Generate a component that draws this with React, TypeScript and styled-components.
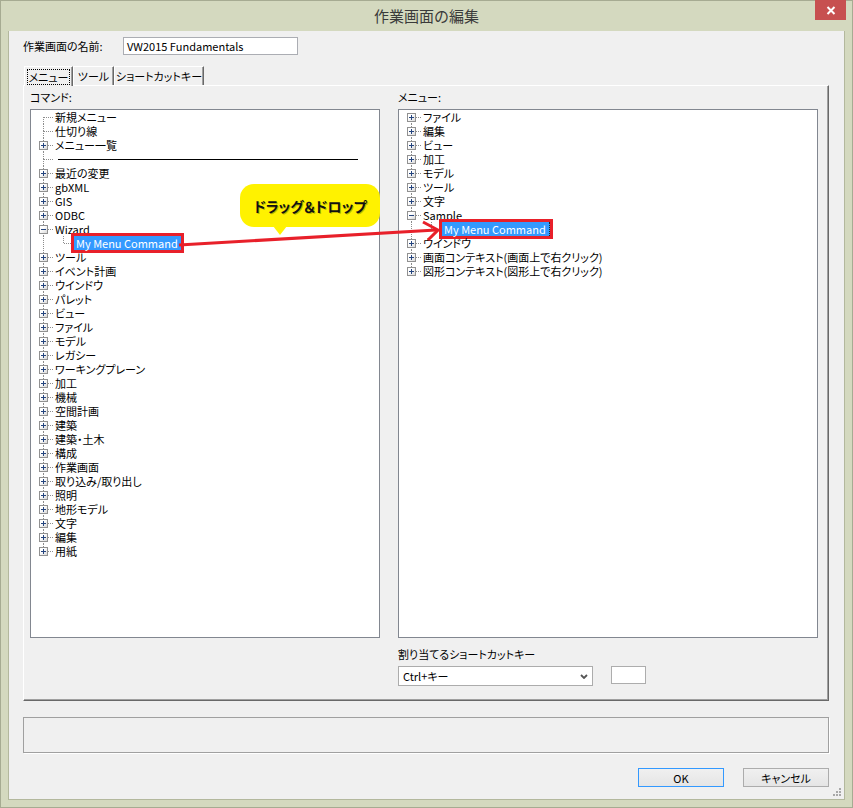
import React from 'react';
import styled, { createGlobalStyle, css } from 'styled-components';

const FONT = `"Noto Sans CJK JP", "Noto Sans", sans-serif`;
const DOT = '#8c8c8c';

const GlobalStyle = createGlobalStyle`
  html, body {
    margin: 0;
    padding: 0;
    background: #d4d9bf;
  }
  body {
    font-family: ${FONT};
  }
`;

type Node = {
  label?: string;
  box?: 'plus' | 'minus';
  separator?: boolean;
  selected?: boolean;
  marked?: boolean;
  focus?: boolean;
  children?: Node[];
};

const plus = (label: string): Node => ({ label, box: 'plus' });

const commandTree: Node[] = [
  { label: '新規メニュー' },
  { label: '仕切り線' },
  plus('メニュー一覧'),
  { separator: true },
  plus('最近の変更'),
  plus('gbXML'),
  plus('GIS'),
  plus('ODBC'),
  {
    label: 'Wizard',
    box: 'minus',
    children: [{ label: 'My Menu Command', selected: true, marked: true }],
  },
  ...[
    'ツール', 'イベント計画', 'ウインドウ', 'パレット', 'ビュー', 'ファイル', 'モデル',
    'レガシー', 'ワーキングプレーン', '加工', '機械', '空間計画', '建築', '建築・土木',
    '構成', '作業画面', '取り込み/取り出し', '照明', '地形モデル', '文字', '編集', '用紙',
  ].map(plus),
];

const menuTree: Node[] = [
  ...['ファイル', '編集', 'ビュー', '加工', 'モデル', 'ツール', '文字'].map(plus),
  {
    label: 'Sample',
    box: 'minus',
    children: [{ label: 'My Menu Command', selected: true, marked: true, focus: true }],
  },
  plus('ウインドウ'),
  plus('画面コンテキスト(画面上で右クリック)'),
  plus('図形コンテキスト(図形上で右クリック)'),
];

function ExpandBox({ kind }: { kind: 'plus' | 'minus' }) {
  return (
    <Box>
      <svg width="7" height="7" viewBox="0 0 7 7" shapeRendering="crispEdges">
        <rect x="1" y="3" width="5" height="1" fill="#24447e" />
        {kind === 'plus' && <rect x="3" y="1" width="1" height="5" fill="#24447e" />}
      </svg>
    </Box>
  );
}

function TreeRows({ nodes, guides }: { nodes: Node[]; guides: boolean[] }) {
  return (
    <>
      {nodes.map((node, i) => {
        const first = i === 0 && guides.length === 0;
        const last = i === nodes.length - 1;
        return (
          <React.Fragment key={i}>
            <Row>
              {guides.map((g, j) => (
                <Guide key={j} $line={g} />
              ))}
              <Connector $top={!first} $bottom={!last}>
                {node.box && <ExpandBox kind={node.box} />}
              </Connector>
              {node.separator ? (
                <SeparatorLine />
              ) : (
                <Label $selected={node.selected} $marked={node.marked} $focus={node.focus}>
                  {node.label}
                </Label>
              )}
            </Row>
            {node.children && <TreeRows nodes={node.children} guides={[...guides, !last]} />}
          </React.Fragment>
        );
      })}
    </>
  );
}

export default function App() {
  return (
    <>
      <GlobalStyle />
      <Window>
        <TitleBar>
          <Title>作業画面の編集</Title>
          <CloseButton>
            <svg width="10" height="9" viewBox="0 0 10 9">
              <path d="M1.5 1 L8.5 8 M8.5 1 L1.5 8" stroke="#fff" strokeWidth="2" />
            </svg>
          </CloseButton>
        </TitleBar>

        <Client>
          <NameRow>
            <NameLabel>作業画面の名前:</NameLabel>
            <NameInput>VW2015 Fundamentals</NameInput>
          </NameRow>

          <TabStrip>
            <Tab $w={49} $active>
              <FocusText>メニュー</FocusText>
            </Tab>
            <Tab $w={41}>ツール</Tab>
            <Tab $w={90}>ショートカットキー</Tab>
          </TabStrip>

          <Panel>
            <Column>
              <FieldLabel>コマンド:</FieldLabel>
              <TreeBox>
                <TreeRows nodes={commandTree} guides={[]} />
              </TreeBox>
            </Column>
            <Column>
              <FieldLabel>メニュー:</FieldLabel>
              <TreeBox>
                <TreeRows nodes={menuTree} guides={[]} />
              </TreeBox>
              <ShortcutLabel>割り当てるショートカットキー</ShortcutLabel>
              <ShortcutRow>
                <Select>
                  <span>Ctrl+キー</span>
                  <svg width="8" height="5" viewBox="0 0 8 5">
                    <path d="M1 1 L4 4 L7 1" stroke="#555" strokeWidth="1.8" fill="none" />
                  </svg>
                </Select>
                <KeyBox />
              </ShortcutRow>
            </Column>
          </Panel>

          <StatusBox />

          <ButtonRow>
            <DialogButton $primary>OK</DialogButton>
            <DialogButton>キャンセル</DialogButton>
          </ButtonRow>

          <Grip>
            <svg width="8" height="8" viewBox="0 0 8 8" shapeRendering="crispEdges">
              <rect x="6" y="0" width="2" height="2" fill="#a8a8a8" />
              <rect x="3" y="3" width="2" height="2" fill="#a8a8a8" />
              <rect x="6" y="3" width="2" height="2" fill="#a8a8a8" />
              <rect x="0" y="6" width="2" height="2" fill="#a8a8a8" />
              <rect x="3" y="6" width="2" height="2" fill="#a8a8a8" />
              <rect x="6" y="6" width="2" height="2" fill="#a8a8a8" />
            </svg>
          </Grip>
        </Client>

        <Callout>ドラッグ＆ドロップ</Callout>
        <ArrowLayer width="853" height="808" viewBox="0 0 853 808">
          <line x1="178" y1="244" x2="435" y2="229" stroke="#e8202a" strokeWidth="3" />
          <polyline
            points="422,221 437,229 427,239"
            stroke="#e8202a"
            strokeWidth="3"
            fill="none"
          />
        </ArrowLayer>
      </Window>
    </>
  );
}

const Window = styled.div`
  position: relative;
  width: 853px;
  height: 808px;
  box-sizing: border-box;
  border: 1px solid #a6ab92;
  background: #d4d9bf;
  display: flex;
  flex-direction: column;
  font-family: ${FONT};
  font-size: 11px;
  color: #000;
  font-feature-settings: "palt";
`;

const TitleBar = styled.div`
  height: 30px;
  flex: none;
  display: grid;
  grid-template-columns: 1fr auto 1fr;
  align-items: start;
`;

const Title = styled.div`
  grid-column: 2;
  font-size: 15px;
  line-height: 30px;
  color: #3a3a3a;
  font-feature-settings: normal;
`;

const CloseButton = styled.div`
  grid-column: 3;
  justify-self: end;
  margin-top: -1px;
  margin-right: 6px;
  width: 31px;
  height: 20px;
  background: #c75050;
  display: flex;
  align-items: center;
  justify-content: center;
`;

const Client = styled.div`
  position: relative;
  flex: 1;
  margin: 0 7px 7px 7px;
  padding: 6px 15px 0 14px;
  background: #f0f0f0;
  border: 1px solid #b3b89d;
  border-width: 0 1px 1px 1px;
  display: flex;
  flex-direction: column;
`;

const NameRow = styled.div`
  display: flex;
  align-items: center;
  height: 18px;
`;

const NameLabel = styled.span`
  width: 100px;
  flex: none;
  line-height: 14px;
`;

const NameInput = styled.div`
  width: 175px;
  height: 18px;
  box-sizing: border-box;
  border: 1px solid #abadb3;
  background: #fff;
  padding: 0 3px;
  line-height: 16px;
`;

const TabStrip = styled.div`
  display: flex;
  margin-top: 11px;
  padding-left: 1px;
  height: 19px;
  position: relative;
  z-index: 1;
`;

const Tab = styled.div<{ $w: number; $active?: boolean }>`
  width: ${p => p.$w}px;
  height: 19px;
  box-sizing: border-box;
  border-top: 1px solid #fff;
  border-left: 1px solid #fff;
  border-right: 1px solid #696969;
  box-shadow: inset -1px 0 0 #a0a0a0;
  background: #f0f0f0;
  display: flex;
  align-items: center;
  justify-content: center;
  line-height: 14px;
  white-space: nowrap;
  ${p =>
    p.$active &&
    css`
      height: 20px;
    `}
`;

const FocusText = styled.span`
  outline: 1px dotted #000;
  padding: 0 1px;
`;

const Panel = styled.div`
  height: 616px;
  box-sizing: border-box;
  border-top: 1px solid #fff;
  border-left: 1px solid #fff;
  border-right: 1px solid #696969;
  border-bottom: 1px solid #696969;
  box-shadow: inset -1px -1px 0 #a0a0a0;
  padding: 4px 12px 0 6px;
  display: grid;
  grid-template-columns: 350px 420px;
  column-gap: 18px;
  align-items: start;
`;

const Column = styled.div`
  display: flex;
  flex-direction: column;
`;

const FieldLabel = styled.div`
  line-height: 14px;
  margin-bottom: 5px;
`;

const TreeBox = styled.div`
  height: 529px;
  box-sizing: border-box;
  border: 1px solid #828790;
  background: #fff;
  padding-left: 5px;
  overflow: hidden;
`;

const Row = styled.div`
  display: flex;
  height: 14px;
  align-items: center;
`;

const vLine = (top: number, h: number) =>
  `repeating-linear-gradient(to bottom, ${DOT} 0 1px, transparent 1px 2px) 7px ${top}px / 1px ${h}px no-repeat`;

const Guide = styled.span<{ $line: boolean }>`
  width: 20px;
  height: 14px;
  flex: none;
  ${p => p.$line && css`background: ${vLine(0, 14)};`}
`;

const Connector = styled.span<{ $top: boolean; $bottom: boolean }>`
  width: 18px;
  height: 14px;
  flex: none;
  box-sizing: border-box;
  padding-left: 3px;
  display: flex;
  align-items: center;
  background: ${p =>
    [
      `repeating-linear-gradient(to right, ${DOT} 0 1px, transparent 1px 2px) 8px 7px / 10px 1px no-repeat`,
      p.$top ? vLine(0, 8) : null,
      p.$bottom ? vLine(7, 7) : null,
    ]
      .filter(Boolean)
      .join(', ')};
`;

const Box = styled.span`
  width: 9px;
  height: 9px;
  box-sizing: border-box;
  border: 1px solid #919191;
  background: linear-gradient(135deg, #ffffff 35%, #d9d9d9);
  display: flex;
  align-items: center;
  justify-content: center;
`;

const Label = styled.span<{ $selected?: boolean; $marked?: boolean; $focus?: boolean }>`
  height: 14px;
  line-height: 14px;
  padding: 0 2px 0 1px;
  white-space: nowrap;
  ${p =>
    p.$selected &&
    css`
      background: #3399ff;
      color: #fff;
      padding: 0 3px 0 2px;
    `}
  ${p =>
    p.$marked &&
    css`
      box-shadow: 0 0 0 3px #e8202a;
    `}
  ${p =>
    p.$focus &&
    css`
      border-right: 1px dotted #222;
    `}
`;

const SeparatorLine = styled.span`
  width: 300px;
  height: 1px;
  margin-left: 4px;
  background: #000;
`;

const ShortcutLabel = styled.div`
  margin-top: 9px;
  line-height: 14px;
`;

const ShortcutRow = styled.div`
  display: flex;
  align-items: flex-start;
  gap: 18px;
  margin-top: 5px;
`;

const Select = styled.div`
  width: 195px;
  height: 20px;
  box-sizing: border-box;
  border: 1px solid #acacac;
  background: #fff;
  display: flex;
  align-items: center;
  justify-content: space-between;
  padding: 0 4px 0 4px;
  line-height: 14px;
`;

const KeyBox = styled.div`
  width: 35px;
  height: 18px;
  box-sizing: border-box;
  border: 1px solid #adadad;
  background: #fff;
`;

const StatusBox = styled.div`
  margin-top: 16px;
  height: 36px;
  box-sizing: border-box;
  border: 1px solid #a0a0a0;
  box-shadow: 1px 1px 0 #fff;
`;

const ButtonRow = styled.div`
  display: flex;
  justify-content: flex-end;
  gap: 19px;
  margin-top: 15px;
`;

const DialogButton = styled.div<{ $primary?: boolean }>`
  width: 86px;
  height: 19px;
  box-sizing: border-box;
  border: 1px solid ${p => (p.$primary ? '#3399ff' : '#acacac')};
  background: linear-gradient(#f0f0f0, #e5e5e5);
  display: flex;
  align-items: center;
  justify-content: center;
  line-height: 14px;
`;

const Grip = styled.div`
  position: absolute;
  right: 3px;
  bottom: 3px;
  width: 8px;
  height: 8px;
  display: flex;
`;

const Callout = styled.div`
  position: absolute;
  left: 239px;
  top: 183px;
  width: 140px;
  height: 43px;
  border-radius: 14px;
  background: #fff200;
  display: flex;
  align-items: center;
  justify-content: center;
  font-size: 14px;
  font-weight: bold;
  color: #111;
  text-shadow: 1px 1px 0 rgba(70, 70, 0, 0.35);

  &::after {
    content: '';
    position: absolute;
    left: 33px;
    bottom: -8px;
    border-left: 7px solid transparent;
    border-right: 7px solid transparent;
    border-top: 9px solid #fff200;
  }
`;

const ArrowLayer = styled.svg`
  position: absolute;
  left: 0;
  top: 0;
  pointer-events: none;
`;
